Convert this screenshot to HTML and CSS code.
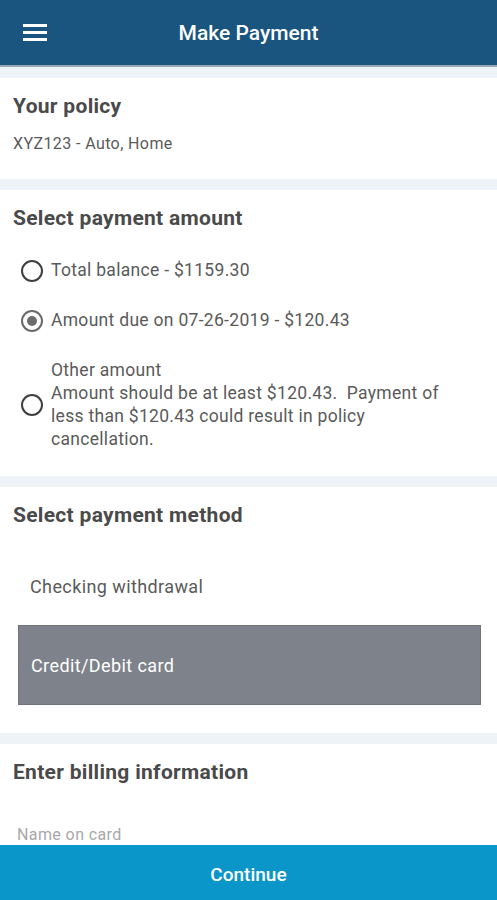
FILE: index.html
```html
<!DOCTYPE html>
<html lang="en">
<head>
  <meta charset="UTF-8">
  <title>Make Payment</title>
  <link rel="stylesheet" href="styles.css">
</head>
<body>

  <header class="barra">
    <svg class="menu" width="24" height="20" viewBox="0 0 24 20">
      <rect x="0" y="2" width="24" height="3" fill="#fff"/>
      <rect x="0" y="9" width="24" height="3" fill="#fff"/>
      <rect x="0" y="16" width="24" height="3" fill="#fff"/>
    </svg>
    <h1>Make Payment</h1>
  </header>

  <main class="contenido">
    <section class="seccion poliza">
      <h2>Your policy</h2>
      <p class="detalle">XYZ123 - Auto, Home</p>
    </section>

    <section class="seccion monto">
      <h2>Select payment amount</h2>
      <label class="opcion">
        <span class="radio"></span>
        <span>Total balance - $1159.30</span>
      </label>
      <label class="opcion">
        <span class="radio activo"></span>
        <span>Amount due on 07-26-2019 - $120.43</span>
      </label>
      <label class="opcion otro">
        <span class="radio"></span>
        <span class="texto-largo">Other amount<br>Amount should be at least $120.43.&nbsp; Payment of less than $120.43 could result in policy cancellation.</span>
      </label>
    </section>

    <section class="seccion metodo">
      <h2>Select payment method</h2>
      <div class="metodo-item">Checking withdrawal</div>
      <div class="metodo-item elegido">Credit/Debit card</div>
    </section>

    <section class="seccion facturacion">
      <h2>Enter billing information</h2>
      <div class="campo">Name on card</div>
    </section>
  </main>

  <button class="continuar">Continue</button>

</body>
</html>
```

FILE: styles.css
```css
body {
  margin: 0;
  background: #eef3f7;
  font-family: Roboto, "Liberation Sans", sans-serif;
  color: #5a5a5a;
  height: 900px;
  overflow: hidden;
}

.barra {
  height: 65px;
  background: #19557f;
  border-bottom: 2px solid #9aa7b2;
  display: flex;
  align-items: center;
  position: relative;
}

.menu {
  position: absolute;
  left: 23px;
  top: 22px;
}

.barra h1 {
  flex: 1;
  margin: 0;
  text-align: center;
  color: #fff;
  font-size: 21px;
  font-weight: 500;
}

.contenido {
  padding-top: 11px;
  display: flex;
  flex-direction: column;
  gap: 11px;
}

.seccion {
  background: #fff;
  padding: 15px 13px 0;
}

.seccion h2 {
  margin: 0;
  font-size: 21px;
  font-weight: 700;
  letter-spacing: 0.3px;
  color: #4a4a4a;
  line-height: 26px;
}

.poliza {
  height: 86px;
}

.detalle {
  margin: 15px 0 0;
  font-size: 16px;
  letter-spacing: 0.4px;
  color: #5a5a5a;
}

.monto {
  height: 271px;
}

.opcion {
  display: flex;
  align-items: center;
  gap: 8px;
  margin-left: 8px;
  font-size: 17.5px;
  letter-spacing: 0.3px;
  line-height: 23px;
  color: #5a5a5a;
}

.opcion:first-of-type {
  margin-top: 28px;
}

.opcion + .opcion {
  margin-top: 27px;
}

.otro {
  margin-top: 28px;
}

.texto-largo {
  max-width: 414px;
}

.radio {
  flex: none;
  width: 18px;
  height: 18px;
  border: 2px solid #3f3f3f;
  border-radius: 50%;
  position: relative;
}

.radio.activo {
  border-color: #6a6a6a;
}

.radio.activo::after {
  content: "";
  position: absolute;
  left: 4px;
  top: 4px;
  width: 10px;
  height: 10px;
  border-radius: 50%;
  background: #6c6c6c;
}

.metodo {
  height: 231px;
  padding-left: 13px;
  padding-right: 16px;
}

.metodo-item {
  font-size: 18px;
  letter-spacing: 0.4px;
  color: #5a5a5a;
  padding: 0 12px;
  margin-left: 5px;
  height: 78px;
  display: flex;
  align-items: center;
}

.metodo-item:first-of-type {
  margin-top: 26px;
  height: 64px;
}

.elegido {
  margin-top: 7px;
  background: #7e828a;
  border: 1px solid #6f737a;
  color: #fff;
}

.facturacion {
  height: 120px;
}

.campo {
  margin-top: 40px;
  margin-left: 4px;
  font-size: 16px;
  letter-spacing: 0.4px;
  color: #a8a8a8;
}

.continuar {
  position: fixed;
  left: 0;
  bottom: 0;
  width: 100%;
  height: 55px;
  padding-top: 4px;
  border: none;
  background: #0a96c8;
  color: #fff;
  font-family: Roboto, "Liberation Sans", sans-serif;
  font-size: 19px;
  font-weight: 500;
}
```
